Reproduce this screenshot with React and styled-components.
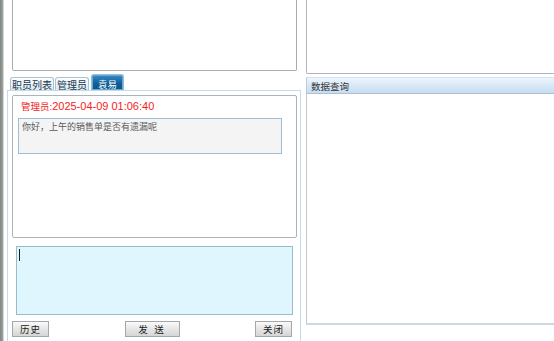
import React from 'react';
import styled, { createGlobalStyle, css } from 'styled-components';

const GlobalStyle = createGlobalStyle`
	html, body {
		margin: 0;
		padding: 0;
		background: #fff;
		overflow: hidden;
	}
	body {
		font-family: 'Liberation Sans', 'Noto Sans CJK SC', sans-serif;
		font-size: 9.5px;
	}
`;

const Screen = styled.div`
	display: flex;
	height: 341px;
	width: 554px;
	overflow: hidden;
	background: #fff;
`;
const EdgeStrip = styled.div`
	width: 3px;
	background: linear-gradient(to right, #7f8580, #9da39e);
	border-right: 1px solid #d4d8d6;
`;
const LeftCol = styled.div`
	width: 297px;
	display: flex;
	flex-direction: column;
`;
const TopBox = styled.div`
	box-sizing: border-box;
	margin-left: 8px;
	width: 285px;
	height: 71px;
	border: 1px solid #a9adb0;
	border-top: none;
	border-radius: 0 0 2px 2px;
	background: #fff;
`;
const TabBar = styled.div`
	display: flex;
	align-items: flex-end;
	gap: 1px;
	height: 19px;
	padding-left: 6px;
`;
const Tab = styled.div`
	box-sizing: border-box;
	height: 13px;
	padding: 0 1px;
	display: flex;
	align-items: center;
	font-size: 10px;
	color: #20384e;
	border: 1px solid #a6c2d6;
	border-bottom: none;
	border-radius: 3px 3px 0 0;
	background: linear-gradient(#ffffff, #dbe8f2);
	${({ active }) =>
		active &&
		css`
			height: 16px;
			margin-left: 1px;
			padding: 2px 6px 0;
			color: #fff;
			font-size: 9.5px;
			border-color: #8cc0dc;
			background: linear-gradient(#3f8cc4, #10609a 55%, #0b5688);
			box-shadow: inset 0 0 0 1px #6aa8d2;
		`}
`;
const TabPanel = styled.div`
	flex: 1;
	margin-left: 3px;
	border: 1px solid #c2dcec;
	border-bottom: none;
	display: flex;
	flex-direction: column;
	padding: 4px 3px 0 4px;
`;
const ChatBox = styled.div`
	box-sizing: border-box;
	height: 143px;
	border: 1px solid #aab4bc;
	border-radius: 2px;
	padding: 4px 0 0 5px;
	background: #fff;
`;
const ChatTitle = styled.div`
	color: #f41c1c;
	font-size: 9.5px;
	line-height: 13px;
	padding-left: 3px;
`;
const TimeText = styled.span`
	font-size: 11px;
`;
const Bubble = styled.div`
	box-sizing: border-box;
	margin-top: 5px;
	width: 264px;
	height: 36px;
	background: #f4f4f4;
	border: 1px solid #9cc0d8;
	color: #5a5a5a;
	font-size: 9px;
	line-height: 12px;
	padding: 2px 3px;
`;
const InputArea = styled.div`
	box-sizing: border-box;
	margin: 8px 0 0 4px;
	width: 277px;
	height: 69px;
	background: #e0f6fe;
	border: 1px solid #96bccd;
	padding: 2px 2px;
`;
const Caret = styled.span`
	display: block;
	width: 1px;
	height: 12px;
	background: #202020;
`;
const ButtonRow = styled.div`
	display: flex;
	justify-content: space-between;
	margin-top: 6px;
	width: 280px;
`;
const Button = styled.div`
	box-sizing: border-box;
	width: ${({ wide }) => (wide ? '55px' : '37px')};
	height: 16px;
	display: flex;
	align-items: center;
	justify-content: center;
	font-size: 9.5px;
	letter-spacing: ${({ wide }) => (wide ? '2px' : '1px')};
	color: #1a1a1a;
	border: 1px solid #a4a8ac;
	background: linear-gradient(#fafafa, #e6e6e6 50%, #d6d6d6);
	white-space: pre;
`;
const RightCol = styled.div`
	flex: 1;
	margin-left: 5px;
	display: flex;
	flex-direction: column;
`;
const RightTop = styled.div`
	height: 74px;
	box-sizing: border-box;
	border-left: 1px solid #b2b6ba;
	border-bottom: 1px solid #b2b6ba;
	border-radius: 0 0 0 2px;
`;
const Header = styled.div`
	box-sizing: border-box;
	margin-top: 3px;
	height: 17px;
	display: flex;
	align-items: center;
	padding-left: 4px;
	color: #333;
	font-size: 9.5px;
	border-top: 1px solid #d2e2f0;
	border-left: 1px solid #b8cee0;
	border-bottom: 1px solid #a6c2da;
	background: linear-gradient(#eef5fc, #d8e8f6 50%, #c8ddf0);
`;
const ResultPane = styled.div`
	box-sizing: border-box;
	height: 231px;
	border-left: 1px solid #c0cad2;
	border-bottom: 2px solid #cdd8e0;
	background: #fff;
`;

const tabs = ['职员列表', '管理员', '袁易'];

export default function App() {
	return (
		<>
			<GlobalStyle />
			<Screen>
				<EdgeStrip />
				<LeftCol>
					<TopBox />
					<TabBar>
						{tabs.map((t, i) => (
							<Tab key={t} active={i === 2}>
								{t}
							</Tab>
						))}
					</TabBar>
					<TabPanel>
						<ChatBox>
							<ChatTitle>
								管理员:<TimeText>2025-04-09 01:06:40</TimeText>
							</ChatTitle>
							<Bubble>你好，上午的销售单是否有遗漏呢</Bubble>
						</ChatBox>
						<InputArea>
							<Caret />
						</InputArea>
						<ButtonRow>
							<Button>历史</Button>
							<Button wide>发 送</Button>
							<Button>关闭</Button>
						</ButtonRow>
					</TabPanel>
				</LeftCol>
				<RightCol>
					<RightTop />
					<Header>数据查询</Header>
					<ResultPane />
				</RightCol>
			</Screen>
		</>
	);
}
